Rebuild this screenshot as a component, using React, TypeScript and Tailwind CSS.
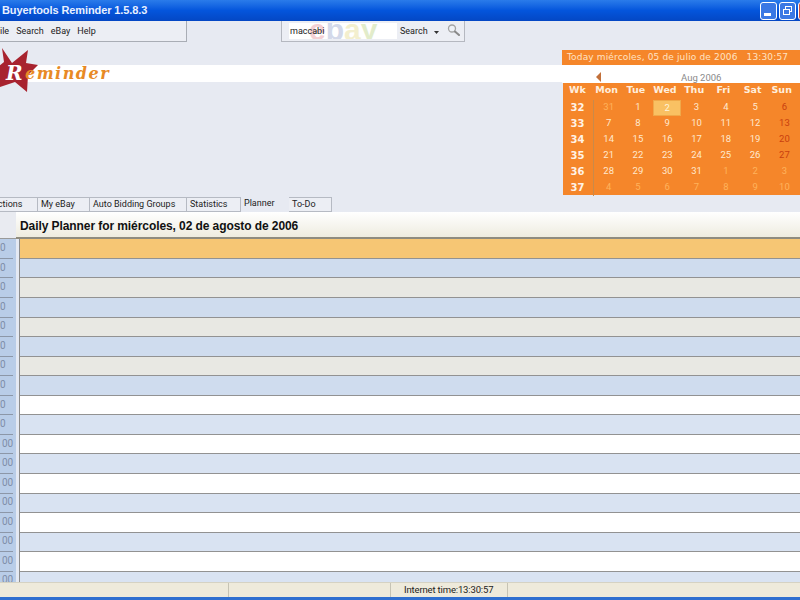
const tabs = [
  { label: 'Auctions', width: 'w-[54px]' },
  { label: 'My eBay', width: 'w-[52px]' },
  { label: 'Auto Bidding Groups', width: 'w-[97px]' },
  { label: 'Statistics', width: 'w-[54px]' },
  { label: 'Planner', width: 'w-[48px]', active: true },
  { label: 'To-Do', width: 'w-[43px]' },
];

const weekDays = ['Mon', 'Tue', 'Wed', 'Thu', 'Fri', 'Sat', 'Sun'];

const weeks = [
  { wk: 32, days: [31, 1, 2, 3, 4, 5, 6], other: [0] },
  { wk: 33, days: [7, 8, 9, 10, 11, 12, 13], other: [] },
  { wk: 34, days: [14, 15, 16, 17, 18, 19, 20], other: [] },
  { wk: 35, days: [21, 22, 23, 24, 25, 26, 27], other: [] },
  { wk: 36, days: [28, 29, 30, 31, 1, 2, 3], other: [4, 5, 6] },
  { wk: 37, days: [4, 5, 6, 7, 8, 9, 10], other: [0, 1, 2, 3, 4, 5, 6] },
];

const rows = [
  { bg: 'bg-[#f6c674]', label: '0' },
  { bg: 'bg-[#cfdcee]', label: '0' },
  { bg: 'bg-[#e8e8e3]', label: '0' },
  { bg: 'bg-[#cfdcee]', label: '0' },
  { bg: 'bg-[#e8e8e3]', label: '0' },
  { bg: 'bg-[#cfdcee]', label: '0' },
  { bg: 'bg-[#e8e8e3]', label: '0' },
  { bg: 'bg-[#cfdcee]', label: '0' },
  { bg: 'bg-white', label: '0' },
  { bg: 'bg-[#d9e3f2]', label: '0' },
  { bg: 'bg-white', label: '00' },
  { bg: 'bg-[#d9e3f2]', label: '00' },
  { bg: 'bg-white', label: '00' },
  { bg: 'bg-[#d9e3f2]', label: '00' },
  { bg: 'bg-white', label: '00' },
  { bg: 'bg-[#d9e3f2]', label: '00' },
  { bg: 'bg-white', label: '00' },
  { bg: 'bg-[#d9e3f2]', label: '00' },
];

const dayTone = (dayIndex: number, other: boolean) => {
  if (other) return 'text-[#ffb35c]';
  return dayIndex === 6 ? 'text-[#c9400f]' : 'text-[#ffe9cf]';
};

const App = () => {
  return (
    <div className="w-[800px] h-[600px] overflow-hidden flex flex-col bg-[#e7eaf2] text-[#222] font-['Roboto',sans-serif] text-[9px]">
      {/* Title bar */}
      <div className="h-[21px] shrink-0 flex items-center justify-between bg-gradient-to-b from-[#2a7bea] via-[#0455dc] to-[#0447c4]">
        <span className="pl-[2px] font-['Liberation_Sans',sans-serif] font-bold text-[11px] tracking-[-0.1px] text-[#e8f0ff]">
          Buyertools Reminder 1.5.8.3
        </span>
        <div className="flex gap-[2px] w-[40px] shrink-0 overflow-hidden">
          <div className="w-[17px] h-[18px] shrink-0 rounded-[3px] border border-white bg-[#3a78e4] flex items-end pl-[3px] pb-[3px]">
            <div className="w-[7px] h-[3px] bg-white" />
          </div>
          <div className="w-[17px] h-[18px] shrink-0 rounded-[3px] border border-white bg-[#3a78e4] flex items-center justify-center">
            <svg width="11" height="11" viewBox="0 0 11 11" fill="none" stroke="#fff" strokeWidth="1">
              <rect x="3.5" y="1.5" width="6" height="5" />
              <rect x="1.5" y="4.5" width="6" height="5" fill="#3a78e4" />
            </svg>
          </div>
          <div className="w-[17px] h-[18px] shrink-0 rounded-[3px] border border-white bg-[#d9533a]" />
        </div>
      </div>

      {/* Toolbars, logo and calendar */}
      <div className="h-[176px] shrink-0 flex">
        <div className="w-[562px] shrink-0">
          <div className="h-[21px] flex">
            <div className="w-[187px] shrink-0 flex items-center gap-[7px] pt-px border-r border-b border-[#a9adb5] bg-[#eceef4] overflow-hidden">
              <span className="-ml-[5px]">File</span>
              <span>Search</span>
              <span>eBay</span>
              <span>Help</span>
            </div>
            <div className="ml-[94px] w-[184px] shrink-0 flex items-center border-x border-b border-[#b5b8c0] bg-[#eceef4] pl-[7px]">
              <div className="relative w-[108px] h-[16px] shrink-0 bg-white overflow-hidden flex items-center">
                <div className="absolute left-[20px] -top-[8px] flex text-[30px] leading-[30px] font-bold font-['Liberation_Sans',sans-serif]">
                  <span className="text-[#f4d0d4]">e</span>
                  <span className="text-[#d3d9ea]">b</span>
                  <span className="text-[#f3efce]">a</span>
                  <span className="text-[#e2ecca]">y</span>
                </div>
                <span className="relative pl-px pt-px">maccabi</span>
              </div>
              <span className="ml-[3px] pt-[2px]">Search</span>
              <svg className="ml-[6px] mt-[2px] shrink-0" width="5" height="3" viewBox="0 0 5 3">
                <path d="M0 0h5L2.5 3z" fill="#333" />
              </svg>
              <svg className="ml-[8px] -mt-[3px] shrink-0" width="13" height="12" viewBox="0 0 13 12">
                <circle cx="5" cy="4.5" r="3.5" fill="#eef1f6" stroke="#a3a3a3" strokeWidth="1.3" />
                <path d="M8 7.5l4 3.5" stroke="#8a8a8a" strokeWidth="2" strokeLinecap="round" />
              </svg>
            </div>
          </div>
          {/* Logo band */}
          <div className="relative mt-[23px] h-[17px] bg-white">
            <svg className="absolute left-0 -top-[17px]" width="40" height="45" viewBox="0 0 40 45">
              <polygon
                points="2,0 12,15 28,2 26,15 38,17 28,27 27,44 15,34 0,39 -6,22 4,14"
                fill="#a8232f"
              />
            </svg>
            <span className="absolute left-[6px] -top-[3px] font-['DejaVu_Serif',serif] font-bold italic text-[20px] leading-[22px] text-white">
              R
            </span>
            <span className="absolute left-[25px] top-0 font-['DejaVu_Serif',serif] font-bold italic text-[16px] leading-[17px] tracking-[1.5px] text-[#e88a25]">
              eminder
            </span>
          </div>
        </div>

        {/* Calendar */}
        <div className="w-[238px] shrink-0 pt-[29px]">
          <div className="h-[15px] bg-[#f5862a] pl-[5px] flex items-center font-['DejaVu_Sans',sans-serif] text-[9px] tracking-[0.15px] text-[#ffe3c4] whitespace-nowrap">
            Today miércoles, 05 de julio de 2006&nbsp;&nbsp;&nbsp;13:30:57
          </div>
          <div className="relative h-[18px] bg-white">
            <svg className="absolute left-[34px] top-[7px]" width="5" height="10" viewBox="0 0 5 10">
              <path d="M5 0v10L0 5z" fill="#c2703a" />
            </svg>
            <span className="absolute left-[119px] top-[7px] text-[9.5px] leading-[12px] text-[#8a8a8a]">Aug 2006</span>
          </div>
          <div className="ml-px bg-[#f5862a] h-[112px] text-[9.5px]">
            <div className="flex h-[16.5px] pb-[3px] items-center font-bold text-[#ffeedd] font-['DejaVu_Sans',sans-serif]">
              <div className="w-[29px] text-center">Wk</div>
              {weekDays.map((d) => (
                <div key={d} className="w-[29.2px] text-center">
                  {d}
                </div>
              ))}
            </div>
            {weeks.map((week) => (
              <div key={week.wk} className="flex h-[16px] items-center">
                <div className="w-[31px] h-full flex items-center justify-center pr-px border-r border-[#c98a4a] font-bold text-[#fff3e6] font-['DejaVu_Sans',sans-serif] text-[10px]">
                  {week.wk}
                </div>
                {week.days.map((day, i) => (
                  <div key={i} className="w-[29.3px] h-full flex items-center justify-center">
                    {week.wk === 32 && i === 2 ? (
                      <div className="w-[28px] h-[16px] bg-[#f9c163] border border-[#f0a94a] text-center leading-[14px] text-[#fff4dc]">
                        {day}
                      </div>
                    ) : (
                      <span className={dayTone(i, week.other.includes(i))}>{day}</span>
                    )}
                  </div>
                ))}
              </div>
            ))}
          </div>
        </div>
      </div>

      {/* Tabs */}
      <div className="h-[15px] shrink-0 flex -ml-[16px]">
        {tabs.map((tab) => (
          <div
            key={tab.label}
            className={
              tab.active
                ? `${tab.width} shrink-0 pl-[3px] leading-[12px] bg-[#e7eaf2]`
                : `${tab.width} shrink-0 pl-[3px] leading-[13px] border-y border-r border-[#b6bac3] bg-[#eceef4]`
            }
          >
            {tab.label}
          </div>
        ))}
      </div>

      {/* Planner */}
      <div className="flex-1 min-h-0 flex flex-col overflow-hidden bg-white">
        <div className="h-[27.4px] shrink-0 flex">
          <div className="w-[16px] shrink-0 bg-[#e9ebf1] border-b border-[#9a9a9a]" />
          <div className="flex-1 pl-[4px] pt-[3px] flex items-center bg-gradient-to-b from-white to-[#eeece0] border-b-2 border-[#8f8c80] font-['Liberation_Sans',sans-serif] font-bold text-[12px] tracking-[-0.08px] text-[#111]">
            Daily Planner for miércoles, 02 de agosto de 2006
          </div>
        </div>
        <div className="flex-1 min-h-0 overflow-hidden">
          {rows.map((row, i) => (
            <div key={i} className="h-[19.55px] flex">
              <div className="w-[16px] shrink-0 bg-[#b9cde8] flex items-center text-[10px] text-[#7f8ea8]">
                <div className="w-[13px] h-full pb-[2px] border-b border-[#8c97a8] flex items-center">
                  <span className={row.label === '00' ? 'pl-[2px]' : ''}>{row.label}</span>
                </div>
              </div>
              <div className="w-[3px] shrink-0 bg-[#e4e9f3]" />
              <div className="w-px shrink-0 bg-[#8c8c8c]" />
              <div className={`flex-1 ${row.bg} border-b border-[#929292]`} />
            </div>
          ))}
        </div>
      </div>

      {/* Status bar */}
      <div className="h-[15px] shrink-0 flex bg-[#eeeadb] border-t border-[#d5d2c3]">
        <div className="w-[229px] shrink-0 border-r border-[#c6c3b4]" />
        <div className="w-[162px] shrink-0 border-r border-[#c6c3b4]" />
        <div className="w-[117px] shrink-0 border-r border-[#c6c3b4] pl-[13px] leading-[14px] text-[9.5px] tracking-[-0.15px] text-[#222] whitespace-nowrap">
          Internet time:13:30:57
        </div>
        <div className="flex-1" />
      </div>
      <div className="h-[3px] shrink-0 bg-[#2f6fd0]" />
    </div>
  );
};

export default App;
